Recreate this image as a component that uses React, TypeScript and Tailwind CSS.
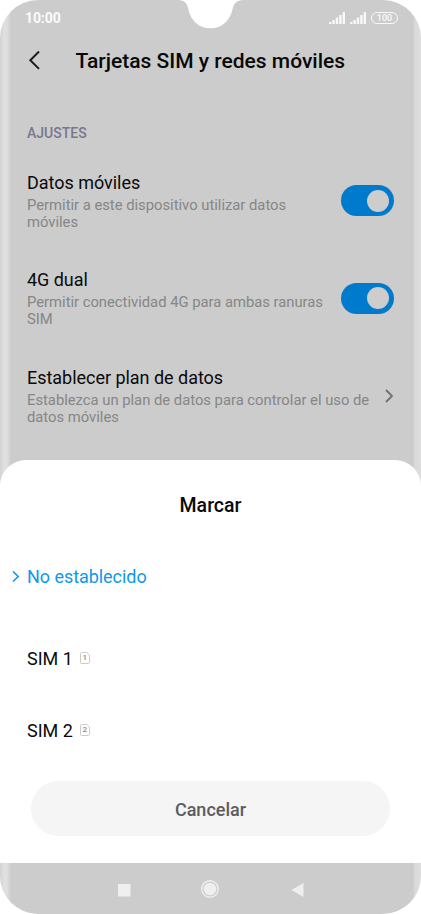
import { ReactNode } from "react";

type SettingProps = {
  title: string;
  lines: string[];
  children: ReactNode;
};

function Setting({ title, lines, children }: SettingProps) {
  return (
    <div className="flex h-[97.5px] items-center justify-between">
      <div>
        <p className="mb-[2px] text-[18px] leading-[24px] tracking-[-0.03px] text-[#0a0a0a]">{title}</p>
        {lines.map((line) => (
          <p key={line} className="text-[14.8px] leading-[17px] tracking-[-0.01px] whitespace-nowrap text-[#868686]">
            {line}
          </p>
        ))}
      </div>
      {children}
    </div>
  );
}

function Toggle() {
  return (
    <button className="flex h-[31px] w-[53px] shrink-0 items-center justify-end rounded-full bg-[#007acc] pr-[5px]">
      <span className="h-[22px] w-[22px] rounded-full bg-[#cdcdcd]" />
    </button>
  );
}

function Signal() {
  return (
    <svg width="16" height="12" viewBox="0 0 16 12" fill="#f8f8f8">
      <rect x="0" y="10" width="2.4" height="2" />
      <rect x="3.4" y="8" width="2.4" height="4" />
      <rect x="6.8" y="5.6" width="2.4" height="6.4" />
      <rect x="10.2" y="3" width="2.4" height="9" />
      <rect x="13.6" y="0" width="2.4" height="12" />
    </svg>
  );
}

function SimIcon({ slot }: { slot: number }) {
  return (
    <span className="relative flex h-[12px] w-[10px] items-center justify-center">
      <svg className="absolute inset-0" width="10" height="12" viewBox="0 0 10 12" fill="none" stroke="#cbcbcb">
        <path d="M1.5 .5h5.3L9.5 3v7.5a1 1 0 0 1-1 1h-7a1 1 0 0 1-1-1v-9a1 1 0 0 1 1-1z" />
      </svg>
      <span className="relative text-[8px] leading-none font-medium text-[#8c8c8c]">{slot}</span>
    </span>
  );
}

export default function App() {
  return (
    <div className="h-[914px] w-[421px] bg-white font-[Roboto,sans-serif]">
      <div className="relative flex h-full flex-col overflow-hidden rounded-[38px] bg-[linear-gradient(90deg,#d3d3d3_0px,#e0e0e0_4px,#dfdfdf_7px,#cccccc_11px,#cccccc_413px,#dadada_415px,#dddddd_421px)]">
        <svg className="absolute top-0 left-[178px]" width="66" height="29" viewBox="0 0 66 29" fill="white">
          <path d="M0 0C7 0 9.500 4 10.500 9.500C12.500 20.500 21 28.300 32.500 28.300C44 28.300 52 20.500 54.500 9.500C55.500 4 58 0 66 0Z" />
        </svg>

        <div className="flex h-[36px] items-center justify-between pr-[23px] pl-[25px]">
          <span className="text-[14px] font-bold tracking-[-0.1px] text-[#fafafa]">10:00</span>
          <div className="flex items-center gap-[5px]">
            <Signal />
            <Signal />
            <span className="flex h-[12px] w-[27px] items-center justify-center rounded-full border border-[#f8f8f8] text-[9px] leading-none font-medium text-[#fafafa]">
              100
            </span>
          </div>
        </div>

        <header className="flex h-[50px] items-center pl-[28px]">
          <svg width="13" height="20" viewBox="0 0 13 20" fill="none" stroke="#1c1c1c" strokeWidth="2">
            <path d="M11 .5L2.300 9.200L11 17.900" />
          </svg>
          <h1 className="ml-[34.5px] pt-[2px] text-[21px] font-medium whitespace-nowrap text-[#080808]">
            Tarjetas SIM y redes móviles
          </h1>
        </header>

        <main className="h-[374px] pr-[27px] pl-[27px]">
          <h2 className="flex h-[66px] items-end pb-[8px] text-[14px] font-medium text-[#77778f]">AJUSTES</h2>
          <Setting title="Datos móviles" lines={["Permitir a este dispositivo utilizar datos", "móviles"]}>
            <Toggle />
          </Setting>
          <Setting title="4G dual" lines={["Permitir conectividad 4G para ambas ranuras", "SIM"]}>
            <Toggle />
          </Setting>
          <Setting
            title="Establecer plan de datos"
            lines={["Establezca un plan de datos para controlar el uso de", "datos móviles"]}
          >
            <svg width="10" height="14" viewBox="0 0 10 14" fill="none" stroke="#707070" strokeWidth="1.8">
              <path d="M2 1L8 7L2 13" />
            </svg>
          </Setting>
        </main>

        <section className="flex h-[403px] flex-col rounded-t-[26px] bg-white text-[18px] text-[#0a0a0a]">
          <h2 className="flex h-[90px] items-center justify-center pt-[2px] text-[19.5px] font-medium">Marcar</h2>
          <button className="flex h-[54px] items-center pl-[12px] text-[#1197ea]">
            <svg width="8" height="12" viewBox="0 0 8 12" fill="none" stroke="currentColor" strokeWidth="1.6">
              <path d="M1 .5L6.200 5.500L1 10.500" />
            </svg>
            <span className="ml-[7px] pb-[2px] tracking-[-0.05px]">No establecido</span>
          </button>
          <button className="mt-[18px] flex h-[72px] items-center gap-[7px] pl-[27px]">
            SIM 1 <SimIcon slot={1} />
          </button>
          <button className="flex h-[72px] items-center gap-[7px] pl-[27px]">
            SIM 2 <SimIcon slot={2} />
          </button>
          <button className="mx-[31px] mt-[15px] h-[55px] rounded-full bg-[#f5f5f5] pt-px font-medium text-[#5c5c5c]">
            Cancelar
          </button>
        </section>

        <nav className="flex h-[51px] items-center pl-[118px]">
          <svg width="186" height="20" viewBox="0 0 186 20" fill="#efefef">
            <rect x="0" y="5" width="12.500" height="12.500" />
            <circle cx="92" cy="10" r="8.300" fill="none" stroke="#efefef" strokeWidth="1.400" />
            <circle cx="92" cy="10" r="6.300" />
            <path d="M173.500 11L185.500 4V18Z" />
          </svg>
        </nav>
      </div>
    </div>
  );
}
